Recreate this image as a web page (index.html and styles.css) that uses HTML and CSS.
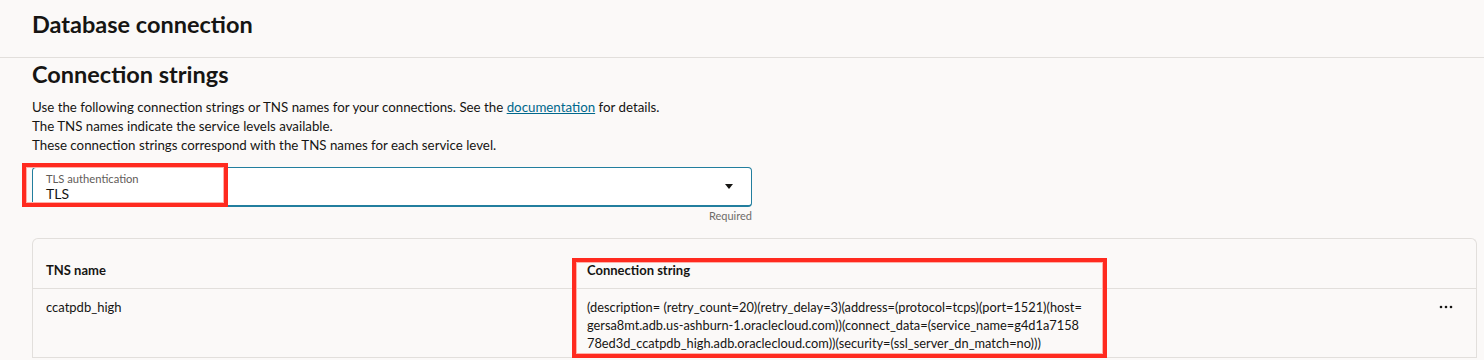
FILE: index.html
```html
<!DOCTYPE html>
<html lang="en">
<head>
  <meta charset="UTF-8">
  <meta name="viewport" content="width=device-width, initial-scale=1.0">
  <title>Database connection</title>
  <link rel="stylesheet" href="styles.css">
</head>
<body>
  <header class="page-header">
    <h1>Database connection</h1>
  </header>

  <main class="content">
    <h2>Connection strings</h2>
    <div class="intro">
      <p>Use the following connection strings or TNS names for your connections. See the <a href="#">documentation</a> for details.</p>
      <p>The TNS names indicate the service levels available.</p>
      <p>These connection strings correspond with the TNS names for each service level.</p>
    </div>

    <div class="field">
      <div class="select">
        <div class="select-text">
          <span class="select-label">TLS authentication</span>
          <span class="select-value">TLS</span>
        </div>
        <svg class="select-arrow" width="8" height="5" viewBox="0 0 8 5"><path d="M0 0h8L4 5z" fill="#161513"/></svg>
        <span class="callout callout-auth"></span>
      </div>
      <div class="field-help">Required</div>
    </div>

    <div class="table-card">
      <div class="row row-head">
        <div class="cell">TNS name</div>
        <div class="cell">Connection string</div>
        <div class="cell"></div>
      </div>
      <div class="row">
        <div class="cell">ccatpdb_high</div>
        <div class="cell conn">
          <span>(description= (retry_count=20)(retry_delay=3)(address=(protocol=tcps)(port=1521)(host=</span>
          <span>gersa8mt.adb.us-ashburn-1.oraclecloud.com))(connect_data=(service_name=g4d1a7158</span>
          <span>78ed3d_ccatpdb_high.adb.oraclecloud.com))(security=(ssl_server_dn_match=no)))</span>
        </div>
        <div class="cell actions">
          <svg width="14" height="4" viewBox="0 0 14 4"><circle cx="2" cy="2" r="1.3" fill="#161513"/><circle cx="7" cy="2" r="1.3" fill="#161513"/><circle cx="12" cy="2" r="1.3" fill="#161513"/></svg>
        </div>
      </div>
      <span class="callout callout-conn"></span>
    </div>
  </main>
</body>
</html>
```

FILE: styles.css
```css
body {
  margin: 0;
  background-color: #fbf9f8;
  color: #161513;
  font-family: 'Lato', 'Liberation Sans', sans-serif;
}
.page-header {
  height: 58px;
  box-sizing: border-box;
  padding: 10px 32px 0;
  border-bottom: 1px solid #e2dfdc;
}
h1, h2 {
  margin: 0;
  font-size: 23.5px;
  line-height: 28px;
  font-weight: 700;
}
.content {
  padding: 0 7px 0 32px;
}
h2 {
  margin-top: 2px;
}
.intro {
  margin-top: 10px;
  font-size: 13.3px;
  line-height: 19px;
}
.intro p {
  margin: 0;
}
.intro a {
  color: #00688c;
  text-decoration: underline;
}
.field {
  width: 720px;
  margin-top: 12px;
}
.select {
  position: relative;
  height: 40px;
  box-sizing: border-box;
  border: 1px solid #227e9e;
  border-bottom-width: 2px;
  border-radius: 4px;
  background: #ffffff;
  display: flex;
  align-items: center;
  justify-content: space-between;
  padding: 0 18px 0 13px;
}
.select-text {
  display: flex;
  flex-direction: column;
}
.select-label {
  font-size: 11.2px;
  line-height: 14px;
  color: #5f5c59;
}
.select-value {
  font-size: 14px;
  line-height: 16px;
}
.field-help {
  text-align: right;
  font-size: 11px;
  line-height: 14px;
  color: #6f6c69;
  margin-top: 2px;
}
.table-card {
  position: relative;
  margin-top: 15px;
  border: 1px solid #e2dfdc;
  border-bottom: none;
  border-radius: 6px 6px 0 0;
  font-size: 13px;
}
.row {
  display: grid;
  grid-template-columns: 541px 1fr 60px;
  border-bottom: 1px solid #e2dfdc;
}
.row-head {
  font-weight: 700;
}
.row .cell {
  padding: 9px 13px 5px;
  line-height: 18px;
}
.row-head .cell {
  padding: 22px 13px 9px;
}
.conn {
  font-size: 12.8px;
}
.conn span {
  display: block;
  white-space: nowrap;
}
.actions {
  display: flex;
  justify-content: center;
  align-items: flex-start;
}
.actions svg {
  margin-top: 7px;
}
.callout {
  position: absolute;
  border: 4px solid #ff2a1f;
  box-shadow: inset 0 0 0 1px #ffb0a8;
  pointer-events: none;
}
.callout-auth {
  left: -11px;
  top: -5px;
  width: 198px;
  height: 36px;
}
.callout-conn {
  left: 539px;
  top: 19px;
  width: 527px;
  height: 92px;
}
```
